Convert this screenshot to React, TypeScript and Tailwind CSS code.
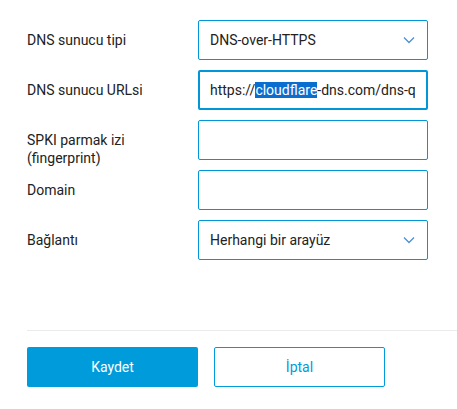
import React from 'react';

const font = { fontFamily: 'Roboto, "Liberation Sans", sans-serif' };

function Chevron() {
  return (
    <svg width="12" height="8" viewBox="0 0 12 8" className="shrink-0">
      <polyline points="1,1.5 6,6.5 11,1.5" fill="none" stroke="#4d8fd6" strokeWidth="1.3" />
    </svg>
  );
}

function Row({ label, children }: { label: React.ReactNode; children: React.ReactNode }) {
  return (
    <div className="flex h-10">
      <div className="w-[171px] shrink-0 pt-[11px] text-[14px] leading-[18px] text-[#222]">{label}</div>
      <div className="w-[230px] h-10">{children}</div>
    </div>
  );
}

function SelectBox({ value }: { value: string }) {
  return (
    <div className="h-10 border border-[#0096d8] rounded-[2px] flex items-center justify-between pl-[11px] pr-[12px] text-[14px] text-[#222]">
      <span>{value}</span>
      <Chevron />
    </div>
  );
}

function EmptyInput() {
  return <div className="h-10 border border-[#0096d8] rounded-[2px]" />;
}

export default function App() {
  return (
    <div className="w-[457px] h-[409px] bg-white" style={font}>
      <div className="pl-[27px] pt-5 flex flex-col gap-[10px]">
        <Row label="DNS sunucu tipi">
          <SelectBox value="DNS-over-HTTPS" />
        </Row>
        <Row label="DNS sunucu URLsi">
          <div className="h-10 border-2 border-[#0096d8] rounded-[2px] flex items-center pl-[10px] pr-[11px] text-[14px] text-[#222]">
            <div className="flex-1 overflow-hidden whitespace-nowrap">
              <span>https://</span>
              <span className="bg-[#0a6ed1] text-white">cloudflare</span>
              <span>-dns.com/dns-q</span>
            </div>
          </div>
        </Row>
        <Row label={<>SPKI parmak izi<br />(fingerprint)</>}>
          <EmptyInput />
        </Row>
        <Row label="Domain">
          <EmptyInput />
        </Row>
        <Row label="Bağlantı">
          <SelectBox value="Herhangi bir arayüz" />
        </Row>
      </div>
      <div className="ml-[27px] mt-[70px] border-t border-[#ebebeb]" />
      <div className="pl-[27px] pt-4 flex gap-4">
        <button className="w-[171px] h-10 rounded-[2px] bg-[#009bdb] text-white text-[14px]">Kaydet</button>
        <button className="w-[171px] h-10 rounded-[2px] border border-[#009bdb] text-[#009bdb] text-[14px]">İptal</button>
      </div>
    </div>
  );
}
